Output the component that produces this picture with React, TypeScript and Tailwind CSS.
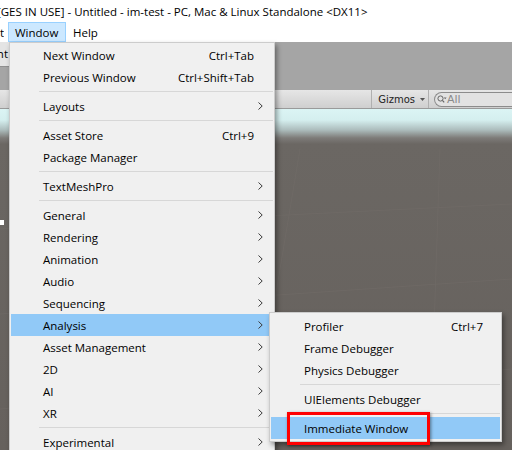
import React from 'react';

type Entry =
  | { kind: 'item'; label: string; shortcut?: string; sub?: boolean; active?: boolean }
  | { kind: 'sep' };

const windowMenu: Entry[] = [
  { kind: 'item', label: 'Next Window', shortcut: 'Ctrl+Tab' },
  { kind: 'item', label: 'Previous Window', shortcut: 'Ctrl+Shift+Tab' },
  { kind: 'sep' },
  { kind: 'item', label: 'Layouts', sub: true },
  { kind: 'sep' },
  { kind: 'item', label: 'Asset Store', shortcut: 'Ctrl+9' },
  { kind: 'item', label: 'Package Manager' },
  { kind: 'sep' },
  { kind: 'item', label: 'TextMeshPro', sub: true },
  { kind: 'sep' },
  { kind: 'item', label: 'General', sub: true },
  { kind: 'item', label: 'Rendering', sub: true },
  { kind: 'item', label: 'Animation', sub: true },
  { kind: 'item', label: 'Audio', sub: true },
  { kind: 'item', label: 'Sequencing', sub: true },
  { kind: 'item', label: 'Analysis', sub: true, active: true },
  { kind: 'item', label: 'Asset Management', sub: true },
  { kind: 'item', label: '2D', sub: true },
  { kind: 'item', label: 'AI', sub: true },
  { kind: 'item', label: 'XR', sub: true },
  { kind: 'sep' },
  { kind: 'item', label: 'Experimental', sub: true },
];

const analysisMenu: Entry[] = [
  { kind: 'item', label: 'Profiler', shortcut: 'Ctrl+7' },
  { kind: 'item', label: 'Frame Debugger' },
  { kind: 'item', label: 'Physics Debugger' },
  { kind: 'sep' },
  { kind: 'item', label: 'UIElements Debugger' },
  { kind: 'sep' },
  { kind: 'item', label: 'Immediate Window', active: true },
];

function Chevron() {
  return (
    <svg width="5" height="8" viewBox="0 0 5 8" className="block">
      <path d="M0.5 0.5 L4.2 4 L0.5 7.5" fill="none" stroke="#3a3a3a" strokeWidth="1" />
    </svg>
  );
}

function MenuList({ entries, textInset, sepInset, trail }: { entries: Entry[]; textInset: string; sepInset: string; trail: string }) {
  return (
    <>
      {entries.map((e, i) =>
        e.kind === 'sep' ? (
          <div key={i} className="h-[7px] flex items-center">
            <div className={`h-px flex-1 bg-[#d7d7d7] ${sepInset}`} />
          </div>
        ) : (
          <div
            key={i}
            className={`h-[22px] flex items-center pt-[2px] text-black ${textInset} ${e.active ? 'bg-[#91c9f7]' : ''}`}
          >
            <span className="flex-1 whitespace-nowrap">{e.label}</span>
            {e.shortcut && <span className="whitespace-nowrap">{e.shortcut}</span>}
            <span className={`${trail} h-full flex items-center pl-[4px] -mt-[2px]`}>{e.sub && <Chevron />}</span>
          </div>
        )
      )}
    </>
  );
}

function SceneToolbar() {
  return (
    <div className="h-[19px] flex items-center justify-end bg-gradient-to-b from-[#e6e6e6] to-[#cfcfcf] border-b border-[#9a9a9a]">
      <div className="h-full w-px bg-[#b0b0b0]" />
      <div className="h-full flex items-center pl-[6px] pr-[3px] gap-[5px] font-['DejaVu_Sans',sans-serif] text-[10px] text-[#222]">
        <span>Gizmos</span>
        <svg width="5" height="3" viewBox="0 0 5 3">
          <path d="M0 0 H5 L2.5 3 Z" fill="#555" />
        </svg>
      </div>
      <div className="h-full w-px bg-[#b0b0b0]" />
      <div className="h-[15px] w-[78px] ml-[5px] flex items-center rounded-l-full border border-r-0 border-[#8c8c8c] bg-[#e2e2e2] pl-[2px]">
        <svg width="10" height="9" viewBox="0 0 10 9">
          <circle cx="3.5" cy="3.5" r="2.6" fill="none" stroke="#666" strokeWidth="1" />
          <path d="M5.4 5.4 L7.2 7.4" stroke="#666" strokeWidth="1.2" />
          <path d="M6.8 2.5 H9.6 L8.2 4.2 Z" fill="#666" />
        </svg>
        <span className="font-['DejaVu_Sans',sans-serif] text-[11px] leading-none text-[#8a8a8a]">All</span>
      </div>
    </div>
  );
}

export default function App() {
  return (
    <div className="relative w-[512px] h-[450px] overflow-hidden bg-white font-['Open_Sans',sans-serif] text-[11.5px]">
      {/* title bar */}
      <div className="h-[22px] flex items-center pt-[2px] whitespace-nowrap text-black -ml-[3px]">
        [GES IN USE] - Untitled - im-test - PC, Mac &amp; Linux Standalone &lt;DX11&gt;
      </div>

      {/* menu bar */}
      <div className="h-[20px] flex items-stretch text-black">
        <div className="w-[4px] overflow-hidden flex justify-end items-center pt-[2px]">
          <span className="whitespace-nowrap">Component</span>
        </div>
        <div className="ml-[4px] w-[58px] border border-[#99d1ff] bg-[#cce8ff] flex items-center pt-[2px] pl-[6px]">Window</div>
        <div className="flex items-center pt-[2px] pl-[7px]">Help</div>
      </div>

      {/* editor behind the menus */}
      <div className="h-[408px] flex flex-col">
        <div className="h-[48px] bg-[#a5a5a5] flex items-start">
          <div className="w-[9px] h-[25px] overflow-hidden flex justify-end items-center bg-[#e4e4e4] border-b border-[#8f8f8f]">
            <span className="whitespace-nowrap text-black pr-[1px]">Content</span>
          </div>
        </div>
        <SceneToolbar />
        <div className="relative flex-1 bg-[linear-gradient(to_bottom,#dbf4f4_0px,#d5efef_11px,#acbcbc_21px,#7d7b78_29px,#6b6763_35px,#66615d_100%)]">
          <svg className="absolute inset-0" width="512" height="340" viewBox="0 0 512 340">
            <g stroke="#756f6b" strokeWidth="1" opacity="0.4">
              <path d="M0 120 L512 95" />
              <path d="M0 205 L512 170" />
              <path d="M0 300 L512 260" />
              <path d="M300 40 L250 340" />
              <path d="M440 40 L430 340" />
            </g>
          </svg>
          <div className="absolute left-0 top-[111px] w-[4px] h-[5px] bg-white" />
        </div>
      </div>

      {/* Window dropdown */}
      <div className="absolute left-[9px] top-[42px] w-[266px] bg-[#f0f0f0] border border-[#cccccc] p-[1px] shadow-[2px_3px_5px_rgba(0,0,0,0.4)]">
        <MenuList entries={windowMenu} textInset="pl-[32px]" sepInset="ml-[28px]" trail="w-[19px]" />
      </div>

      {/* Analysis submenu */}
      <div className="absolute left-[269px] top-[312px] w-[233px] bg-[#f0f0f0] border border-[#cccccc] pt-[2px] pb-[2px] px-[1px] shadow-[2px_3px_5px_rgba(0,0,0,0.4)]">
        <MenuList entries={analysisMenu} textInset="pl-[33px]" sepInset="ml-[29px]" trail="w-[17px]" />
      </div>

      {/* highlight around the picked item */}
      <div className="absolute left-[287px] top-[412px] w-[143px] h-[33px] border-[3px] border-[#ff0000] shadow-[1px_1px_3px_rgba(0,0,0,0.45)]" />
    </div>
  );
}
